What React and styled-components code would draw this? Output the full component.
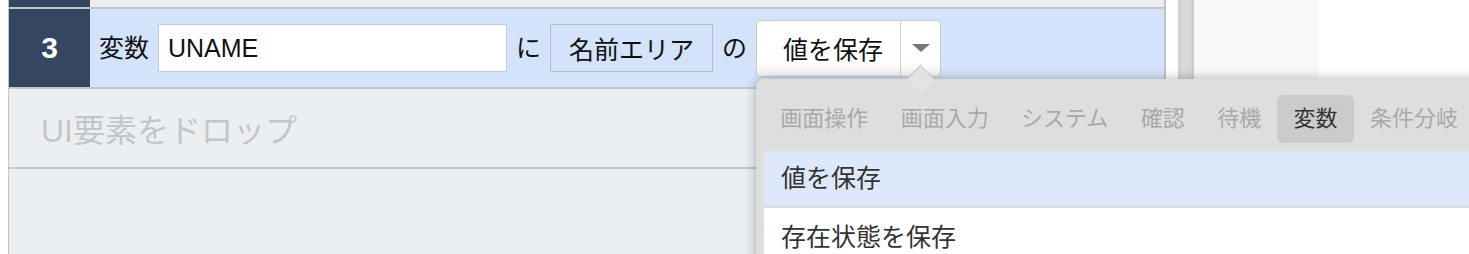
import React from "react";
import styled, { createGlobalStyle } from "styled-components";

const GlobalStyle = createGlobalStyle`
  html, body {
    margin: 0;
    padding: 0;
    background: #ffffff;
  }
  body {
    font-family: "Liberation Sans", "Noto Sans CJK JP", sans-serif;
    color: #111;
  }
`;

const Page = styled.div`
  display: flex;
  width: 1469px;
  height: 254px;
  overflow: hidden;
`;

const Editor = styled.div`
  box-sizing: border-box;
  width: 1158px;
  margin-left: 8px;
  flex-shrink: 0;
  background: #eceff1;
  border-left: 1px solid #c3c6c9;
  border-right: 2px solid #bfc3c7;
`;

const Row = styled.div`
  display: flex;
  height: ${(p) => p.$h || 78}px;
  background: ${(p) => (p.$active ? "#d3e3fb" : "transparent")};
  border-bottom: 2px solid #c3c6c9;
`;

const NumCell = styled.div`
  width: 81px;
  flex-shrink: 0;
  background: #354760;
  color: #ffffff;
  font-weight: 700;
  font-size: 30px;
  display: flex;
  align-items: center;
  justify-content: center;
`;

const Body = styled.div`
  display: flex;
  align-items: center;
  gap: 9px;
  padding-left: 9px;
`;

const Word = styled.span`
  font-size: 25px;
  line-height: 1;
  color: #111;
`;

const TextInput = styled.input`
  box-sizing: border-box;
  width: 349px;
  height: 48px;
  border: 1px solid #c9ccce;
  background: #ffffff;
  padding: 0 9px;
  font-family: "Liberation Sans", "Noto Sans CJK JP", sans-serif;
  font-size: 25px;
  color: #111;
  outline: none;
`;

const Target = styled.div`
  box-sizing: border-box;
  height: 48px;
  display: flex;
  align-items: center;
  padding: 0 18px;
  border: 1px solid #b9bcbe;
  font-size: 25px;
  color: #111;
`;

const SelectWrap = styled.div`
  position: relative;
`;

const SelectButton = styled.div`
  box-sizing: border-box;
  display: flex;
  height: 57px;
  width: 185px;
  background: linear-gradient(to bottom, #ffffff 70%, #f3f3f3);
  border: 1px solid #c8c8c8;
  border-radius: 4px;
`;

const SelectLabel = styled.div`
  display: flex;
  align-items: center;
  padding: 0 17px 0 26px;
  font-size: 25px;
  color: #111;
  border-right: 1px solid #d0d0d0;
`;

const CaretBox = styled.div`
  flex: 1;
  display: flex;
  align-items: center;
  justify-content: center;
`;

const Caret = styled.span`
  width: 0;
  height: 0;
  border-left: 9.5px solid transparent;
  border-right: 9.5px solid transparent;
  border-top: 8px solid #787878;
`;

const Menu = styled.div`
  position: absolute;
  top: calc(100% + 2px);
  left: 0;
  z-index: 10;
  width: 760px;
  height: 200px;
  padding: 16px 0 0 8px;
  background: #dedede;
  border-radius: 8px 0 0 0;
  box-shadow: 0 0 12px rgba(0, 0, 0, 0.3);

  &::before {
    content: "";
    position: absolute;
    top: -10px;
    left: 154px;
    width: 20px;
    height: 20px;
    background: #e3e3e3;
    border-top: 1px solid #c4c4c4;
    border-left: 1px solid #c4c4c4;
    transform: rotate(45deg);
    z-index: -1;
  }
`;

const Tabs = styled.div`
  display: flex;
  height: 48px;
`;

const Tab = styled.div`
  padding: 0 16.2px;
  line-height: 48px;
  font-size: 22px;
  border-radius: 6px;
  white-space: nowrap;
  color: ${(p) => (p.$active ? "#333333" : "#a9a9a9")};
  background: ${(p) => (p.$active ? "#cbcbcb" : "transparent")};
`;

const List = styled.div`
  margin-top: 8px;
  background: #ffffff;
  border-radius: 4px 0 0 0;
  overflow: hidden;
`;

const Item = styled.div`
  height: ${(p) => (p.$active ? 54 : 58)}px;
  line-height: ${(p) => (p.$active ? 54 : 58)}px;
  padding-left: 17px;
  font-size: 25px;
  color: #333333;
  background: ${(p) => (p.$active ? "#dde9fb" : "#ffffff")};
  border-bottom: ${(p) => (p.$active ? "3px solid #dcdfe2" : "none")};
`;

const DropRow = styled.div`
  display: flex;
  align-items: center;
  height: 78px;
  padding-left: 32px;
  font-size: 32px;
  color: #c3c6c9;
  border-bottom: 2px solid #c3c6c9;
`;

const Gutter = styled.div`
  width: 12px;
  flex-shrink: 0;
  background: #ffffff;
`;

const Scrollbar = styled.div`
  width: 16px;
  flex-shrink: 0;
  background: linear-gradient(to right, #cfcfcf, #dbdbdb 35%, #d5d5d5 80%, #c6c6c6);
`;

const SidePane = styled.div`
  width: 124px;
  flex-shrink: 0;
  background: #f7f8fa;
`;

const Rest = styled.div`
  flex: 1;
  background: #ffffff;
`;

const tabs = ["画面操作", "画面入力", "システム", "確認", "待機", "変数", "条件分岐"];

export default function App() {
  return (
    <>
      <GlobalStyle />
      <Page>
        <Editor>
          <Row $h={7}>
            <NumCell />
          </Row>
          <Row $active>
            <NumCell>3</NumCell>
            <Body>
              <Word>変数</Word>
              <TextInput defaultValue="UNAME" />
              <Word>に</Word>
              <Target>名前エリア</Target>
              <Word>の</Word>
              <SelectWrap>
                <SelectButton>
                  <SelectLabel>値を保存</SelectLabel>
                  <CaretBox>
                    <Caret />
                  </CaretBox>
                </SelectButton>
                <Menu>
                  <Tabs>
                    {tabs.map((t) => (
                      <Tab key={t} $active={t === "変数"}>
                        {t}
                      </Tab>
                    ))}
                  </Tabs>
                  <List>
                    <Item $active>値を保存</Item>
                    <Item>存在状態を保存</Item>
                  </List>
                </Menu>
              </SelectWrap>
            </Body>
          </Row>
          <DropRow>UI要素をドロップ</DropRow>
        </Editor>
        <Gutter />
        <Scrollbar />
        <SidePane />
        <Rest />
      </Page>
    </>
  );
}
